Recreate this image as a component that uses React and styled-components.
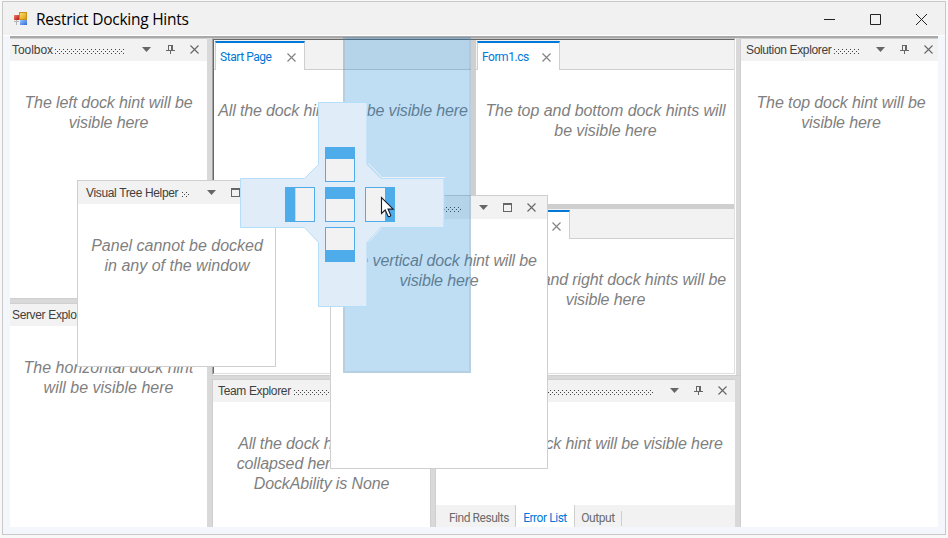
import React from 'react';
import styled, { createGlobalStyle, css } from 'styled-components';

const Global = createGlobalStyle`
  * { box-sizing: border-box; }
  body { margin: 0; background: #fafafa; font-family: "Liberation Sans", Arial, sans-serif; }
  svg { display: block; flex: none; }
`;

const Page = styled.div`
  width: 948px;
  height: 538px;
  padding: 1px 2px 3px 2px;
  overflow: hidden;
  background: #f9f8f8;
`;

const Window = styled.div`
  position: relative;
  width: 944px;
  height: 534px;
  border: 1px solid #c9c9c9;
  background: #f3f7fc;
`;

const TitleBar = styled.header`
  display: flex;
  align-items: center;
  height: 34px;
  padding: 0 18px 0 11px;
  background: #f1f1f1;
  border-bottom: 1px solid #fff;
`;

const Title = styled.h1`
  flex: 1;
  margin: 0 0 0 7px;
  font: 400 15.5px/20px "Open Sans", "Noto Sans", sans-serif;
  letter-spacing: -0.25px;
  color: #000;
  white-space: nowrap;
`;

const Caption = styled.div`
  display: flex;
  gap: 35px;
  align-items: center;
  padding-top: 2px;
`;

const Client = styled.main`
  display: grid;
  grid-template-columns: 197px 533px 198px;
  height: 491px;
  width: 928px;
  margin-left: 7px;
  border-top: 2px solid #a9a9a9;
  background: #d9d9d9;
`;

const Column = styled.div`
  display: flex;
  flex-direction: column;
  min-width: 0;
  min-height: 0;
`;

const Center = styled(Column)`
  padding: 0 0 0 5px;
`;

const Panel = styled.section`
  display: flex;
  flex-direction: column;
  min-width: 0;
  flex: ${p => (p.$h || p.$w ? 'none' : 1)};
  width: ${p => (p.$w ? `${p.$w}px` : 'auto')};
  height: ${p => (p.$h ? `${p.$h}px` : 'auto')};
  border-top: 1px solid #cfcfcf;
  border-left: ${p => (p.$edge ? '1px solid #cfcfcf' : '0')};
  background: #fff;
`;

const Splitter = styled.div`
  flex: none;
  width: ${p => (p.$vertical ? `${p.$size}px` : 'auto')};
  height: ${p => (p.$vertical ? 'auto' : `${p.$size}px`)};
  background: ${p => p.$tone || '#d9d9d9'};
  border: 0 solid #cfcfcf;
  border-width: ${p => (p.$vertical ? '0 0 0 1px' : '1px 0 0 0')};
`;

const PanelHeader = styled.div`
  display: flex;
  flex: none;
  align-items: center;
  height: ${p => p.$height || 22}px;
  padding: 0 ${p => p.$right ?? 8}px ${p => (p.$height ? 0 : 1)}px ${p => p.$left ?? 2}px;
  background: #f2f2f2;
`;

const PanelTitle = styled.span`
  width: ${p => p.$w}px;
  white-space: nowrap;
  font-size: 12px;
  line-height: 20px;
  letter-spacing: ${p => p.$ls ?? -0.35}px;
  color: #3f3f3f;
`;

const GripBox = styled.div`
  flex: 1;
  min-width: 0;
  height: 5px;
  margin: 4px 17px 0 3px;
  overflow: hidden;
`;

const Tools = styled.div`
  display: flex;
  flex: none;
  align-items: center;
  gap: 15px;
`;

const Message = styled.div`
  padding-top: ${p => p.$top ?? 32}px;
  padding-left: ${p => p.$shift ?? 0}px;
  text-align: center;
`;

const Line = styled.div`
  font-size: 16px;
  font-style: italic;
  line-height: 20px;
  letter-spacing: ${p => p.$ls ?? -0.12}px;
  color: #7f7f7f;
  white-space: nowrap;
`;

const DocumentWell = styled.div`
  display: flex;
  flex: none;
  width: 524px;
  height: 337px;
  border: 1px solid #fff;
  border-top-color: #c4c4c4;
  border-left-color: #a4a4a4;
`;

const Documents = styled.div`
  display: flex;
  flex: 1;
  border: 1px solid #e0e0e0;
  border-top-color: #686868;
  border-left-color: #686868;
  background: #fff;
`;

const DocGroup = styled.div`
  display: flex;
  flex-direction: column;
  flex: none;
  width: ${p => (p.$w ? `${p.$w}px` : 'auto')};
  height: ${p => (p.$h ? `${p.$h}px` : 'auto')};
  background: #fff;
`;

const TabStrip = styled.div`
  display: flex;
  height: 30px;
  padding: 1px 0 0 1px;
  background: linear-gradient(#cfcfcf, #cfcfcf) 0 100% / 100% 1px no-repeat #f2f2f2;
`;

const DocTab = styled.div`
  display: flex;
  align-items: center;
  justify-content: space-between;
  width: ${p => p.$w}px;
  height: 29px;
  padding: 1px 8px 0 4px;
  border: 1px solid #cfcfcf;
  border-width: 2px 1px 0 1px;
  border-top-color: #0078d7;
  background: #fff;
  color: #0078d7;
  font: 400 12px/20px Roboto, "Liberation Sans", sans-serif;
  letter-spacing: -0.45px;
  white-space: nowrap;
`;

const BottomRow = styled.div`
  display: flex;
  flex: 1;
  min-height: 0;
  width: 523px;
`;

const BottomTabs = styled.div`
  display: flex;
  align-items: stretch;
  height: 22px;
  margin-top: auto;
  padding-left: 7px;
  background: #f2f2f2;
`;

const BottomTab = styled.div`
  width: ${p => p.$w}px;
  padding-top: 3px;
  text-align: center;
  font: 400 12px/20px Roboto, "Liberation Sans", sans-serif;
  letter-spacing: -0.45px;
  white-space: nowrap;
  color: #6b6b6b;
  ${p => p.$active && css`
    background: #fff;
    color: #0078d7;
    border: 1px solid #cfcfcf;
    border-width: 0 1px;
  `}
`;

const TabEnd = styled.div`
  width: 1px;
  height: 15px;
  margin-top: 6px;
  background: #cfcfcf;
`;

const Floating = styled.section`
  position: absolute;
  left: ${p => p.$x}px;
  top: ${p => p.$y}px;
  width: ${p => p.$w}px;
  height: ${p => p.$h}px;
  border: 1px solid #cfcfcf;
  background: #fff;
`;

const DropPreview = styled.div`
  position: absolute;
  left: 340px;
  top: 35px;
  width: 128px;
  height: 336px;
  border: 2px solid rgba(150, 150, 150, 0.2);
  background: rgba(0, 122, 212, 0.25);
`;

const HintOverlay = styled.div`
  position: absolute;
  left: 237px;
  top: 100px;
`;

const Arrow = () => (
  <svg width="9" height="5" viewBox="0 0 9 5"><path d="M0 0H9L4.500 5Z" fill="#666" /></svg>
);
const Pin = () => (
  <svg width="9" height="9" viewBox="0 0 9 9" shapeRendering="crispEdges">
    <path d="M2 0h5v1H2zM2 1h1v4H2zM5 1h2v4H5zM0 5h9v1H0zM4 6h1v3H4z" fill="#666" />
  </svg>
);
const Cross = ({ color = '#666' }) => (
  <svg width="9" height="9" viewBox="0 0 9 9"><path d="M.5.5l8 8M8.500.5l-8 8" stroke={color} strokeWidth="1.1" /></svg>
);
const Square = () => (
  <svg width="9" height="9" viewBox="0 0 9 9" shapeRendering="crispEdges">
    <path d="M0 0h9v9H0zM1 2v6h7V2z" fillRule="evenodd" fill="#666" />
  </svg>
);

const Grip = () => (
  <GripBox>
    <svg width="600" height="5" shapeRendering="crispEdges">
      <defs>
        <pattern id="grip" width="4" height="4" patternUnits="userSpaceOnUse">
          <path d="M0 0h1v1H0zM2 2h1v1H2z" fill="#444" />
        </pattern>
      </defs>
      <rect width="600" height="5" fill="url(#grip)" />
    </svg>
  </GripBox>
);

const Header = ({ title, w, ls, floating, ...rest }) => (
  <PanelHeader {...rest}>
    <PanelTitle $w={w} $ls={ls}>{title}</PanelTitle>
    <Grip />
    <Tools><Arrow />{floating ? <Square /> : <Pin />}<Cross /></Tools>
  </PanelHeader>
);

const Hint = ({ lines, top, ls, shift }) => (
  <Message $top={top} $shift={shift}>{lines.map(t => <Line key={t} $ls={ls}>{t}</Line>)}</Message>
);

const AppIcon = () => (
  <svg width="15" height="14" viewBox="0 0 15 14">
    <defs>
      <linearGradient id="gold" x2="1" y2="1"><stop stopColor="#ffe07a" /><stop offset="1" stopColor="#d99a00" /></linearGradient>
      <linearGradient id="blue" x2="1" y2="1"><stop stopColor="#9cc3ff" /><stop offset="1" stopColor="#3068d8" /></linearGradient>
      <linearGradient id="red" x2="1" y2="1"><stop stopColor="#f08070" /><stop offset="1" stopColor="#b01810" /></linearGradient>
    </defs>
    <rect x="5.500" y=".5" width="7" height="7" fill="url(#gold)" stroke="#c59217" />
    <rect x="0" y="3" width="5" height="5" fill="url(#red)" />
    <rect x="6" y="8" width="7" height="5" fill="url(#blue)" />
    <path d="M2.500 8v5M0 9.500h5" stroke="#b4b4b4" />
  </svg>
);

const DockHints = () => (
  <svg width="206" height="207" viewBox="0 0 206 207">
    <path d="M128.500 61.500L142 75.500H205M141 126.500L128.500 140" fill="none" stroke="#eef2f6" />
    <path
      d="M78.500 .5H127V62.500L141 76.500H204V125.500H141L127 140.500V204.500H78.500V140.500L64.500 125.500H.5V76.500H64.500L78.500 62.500Z"
      fill="#e0ecf8" stroke="#b5defb"
    />
    <g fill="#f2f2f2" stroke="#4dace9" shapeRendering="crispEdges">
      <path d="M85.500 45.500h29v34h-29zM85.500 85.500h29v34h-29zM85.500 125.500h29v34h-29zM45.500 85.500h29v34h-29zM125.500 85.500h29v34h-29z" />
    </g>
    <path d="M85 45h30v12H85zM85 85h30v12H85zM85 148h30v12H85zM45 85h10v35H45zM145 85h10v35H145z" fill="#4dace9" />
    <path d="M55.500 86v33" stroke="#b5defb" />
    <path d="M141.500 95.500v16l3.700-3.500 3 6.500q2 .6 2.600-1.200l-2.800-6.200h5.200z" fill="#fff" stroke="#1a1a2e" strokeWidth="1.1" />
  </svg>
);

export default function App() {
  return (
    <Page>
      <Global />
      <Window>
        <TitleBar>
          <AppIcon />
          <Title>Restrict Docking Hints</Title>
          <Caption>
            <svg width="11" height="11"><path d="M0 5.500h11" stroke="#222" /></svg>
            <svg width="11" height="11"><path d="M.5.5h10v10H.5z" fill="none" stroke="#222" /></svg>
            <svg width="11" height="11"><path d="M0 0l11 11M11 0L0 11" stroke="#222" /></svg>
          </Caption>
        </TitleBar>

        <Client>
          <Column>
            <Panel $h={260}>
              <Header title="Toolbox" w={40} ls={-0.05} />
              <Hint ls={-0.1} lines={['The left dock hint will be', 'visible here']} />
            </Panel>
            <Splitter $size={5} />
            <Panel>
              <Header title="Server Explorer" w={77} />
              <Hint ls={0} lines={['The horizontal dock hint', 'will be visible here']} />
            </Panel>
          </Column>

          <Center>
            <DocumentWell>
              <Documents>
                <DocGroup $w={257}>
                  <TabStrip><DocTab $w={90}>Start Page<Cross color="#808080" /></DocTab></TabStrip>
                  <Hint top={31} shift={1} ls={-0.15} lines={['All the dock hints will be visible here']} />
                </DocGroup>
                <Splitter $vertical $size={5} $tone="#cfcfcf" />
                <DocGroup $w={258}>
                  <DocGroup $h={164}>
                    <TabStrip><DocTab $w={83}>Form1.cs<Cross color="#808080" /></DocTab></TabStrip>
                    <Hint top={31} shift={1} ls={-0.05} lines={['The top and bottom dock hints will', 'be visible here']} />
                  </DocGroup>
                  <Splitter $size={5} $tone="#cfcfcf" />
                  <DocGroup>
                    <TabStrip><DocTab $w={93}>Form2.cs<Cross color="#808080" /></DocTab></TabStrip>
                    <Hint top={31} shift={1} lines={['The left and right dock hints will be', 'visible here']} />
                  </DocGroup>
                </DocGroup>
              </Documents>
            </DocumentWell>
            <Splitter $size={4} />
            <BottomRow>
              <Panel $edge $w={218}>
                <Header title="Team Explorer" w={73} $left={5} />
                <Hint lines={['All the dock hints will be', 'collapsed here since the', 'DockAbility is None']} />
              </Panel>
              <Splitter $vertical $size={5} />
              <Panel $edge>
                <Header title="Error List" w={50} $left={5} />
                <Hint lines={['The center dock hint will be visible here']} />
                <BottomTabs>
                  <BottomTab $w={72}>Find Results</BottomTab>
                  <BottomTab $w={60} $active>Error List</BottomTab>
                  <BottomTab $w={46}>Output</BottomTab>
                  <TabEnd />
                </BottomTabs>
              </Panel>
            </BottomRow>
          </Center>

          <Panel $edge>
            <Header title="Solution Explorer" w={85} $left={5} $right={5} />
            <Hint shift={3} ls={-0.1} lines={['The top dock hint will be', 'visible here']} />
          </Panel>
        </Client>

        <Floating $x={74} $y={178} $w={199} $h={187}>
          <Header floating title="Visual Tree Helper" w={93} $left={8} $right={11} $height={23} />
          <Hint ls={0} shift={1} lines={['Panel cannot be docked', 'in any of the window']} />
        </Floating>
        <Floating $x={327} $y={193} $w={218} $h={274}>
          <Header floating title="Properties" w={60} $left={8} $right={11} $height={23} />
          <Hint ls={-0.15} lines={['The vertical dock hint will be', 'visible here']} />
        </Floating>
        <DropPreview />
        <HintOverlay><DockHints /></HintOverlay>
      </Window>
    </Page>
  );
}
